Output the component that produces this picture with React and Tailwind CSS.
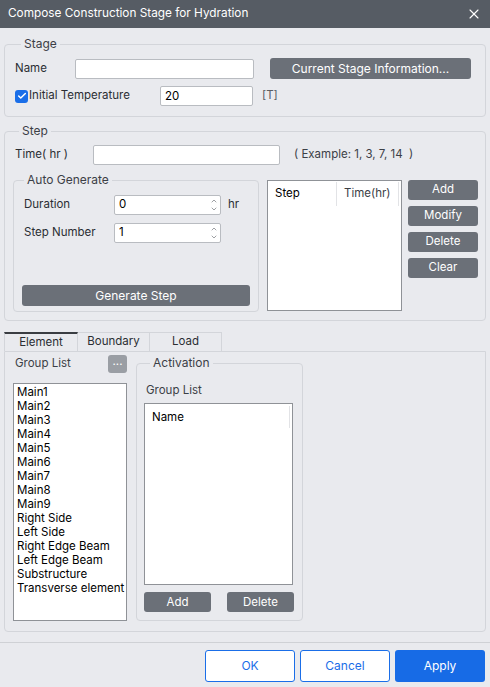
import React from "react";
import { X, Check, ChevronUp, ChevronDown } from "lucide-react";

const groups = [
  "Main1", "Main2", "Main3", "Main4", "Main5", "Main6", "Main7", "Main8", "Main9",
  "Right Side", "Left Side", "Right Edge Beam", "Left Edge Beam", "Substructure", "Transverse element",
];

const GrayButton = ({ children, className = "" }) => (
  <button
    type="button"
    className={`bg-[#6b7078] text-white text-[11.5px] rounded-[3px] flex items-center justify-center ${className}`}
  >
    {children}
  </button>
);

const SpinBox = ({ value }) => (
  <div className="w-[107px] h-[20px] bg-white border border-[#b9bcc1] rounded-[2px] flex items-center pl-[4px]">
    <span className="flex-1 text-[11.5px] text-black">{value}</span>
    <div className="flex flex-col items-center pr-[2px] text-[#8a8d92]">
      <ChevronUp size={8} strokeWidth={2.5} />
      <ChevronDown size={8} strokeWidth={2.5} />
    </div>
  </div>
);

const Legend = ({ children, className = "" }) => (
  <legend className={`px-[3px] text-[12px] leading-[16px] text-[#3c4046] ${className}`}>{children}</legend>
);

export default function App() {
  return (
    <div
      className="w-[490px] h-[687px] bg-[#e9eaee] flex flex-col text-[11.5px] text-[#2b2e33] overflow-hidden"
      style={{ fontFamily: "Inter, 'Noto Sans', sans-serif" }}
    >
      {/* Title */}
      <div className="h-[28px] bg-[#565c64] flex items-center justify-between pl-[8px] pr-[8px] shrink-0">
        <span className="text-white text-[11.8px]">Compose Construction Stage for Hydration</span>
        <X size={16} strokeWidth={1.6} className="text-white" />
      </div>

      <div className="px-[4px] pt-[8px] flex flex-col">
        {/* Stage */}
        <fieldset className="border border-[#d3d5da] rounded-[4px] pl-[10px] pr-[12px] pb-[10px] h-[81px]">
          <Legend className="ml-[6px]">Stage</Legend>
          <div className="flex items-center mt-[6px] h-[21px]">
            <span className="w-[60px]">Name</span>
            <div className="w-[179px] h-[20px] bg-white border border-[#b9bcc1] rounded-[2px]" />
            <GrayButton className="ml-[16px] w-[201px] h-[21px] text-[12px]">Current Stage Information...</GrayButton>
          </div>
          <div className="flex items-center mt-[7px] h-[20px]">
            <div className="w-[13px] h-[13px] rounded-[3px] bg-[#1a6ee8] flex items-center justify-center">
              <Check size={10} strokeWidth={3.5} className="text-white" />
            </div>
            <span className="ml-[1px] w-[131px]">Initial Temperature</span>
            <div className="w-[93px] h-[20px] bg-white border border-[#b9bcc1] rounded-[2px] pl-[4px] text-black leading-[18px]">20</div>
            <span className="ml-[9px] text-[#5a5e64]">[T]</span>
          </div>
        </fieldset>

        {/* Step */}
        <fieldset className="mt-[6px] border border-[#d3d5da] rounded-[4px] pl-[8px] pr-[7px] h-[198px]">
          <Legend className="ml-[6px]">Step</Legend>
          <div className="flex items-center mt-[6px] h-[20px]">
            <span className="ml-[2px] w-[78px]">Time( hr )</span>
            <div className="w-[187px] h-[20px] bg-white border border-[#b9bcc1] rounded-[2px]" />
            <span className="ml-[14px] text-[#3c4046]">( Example: 1, 3, 7, 14&nbsp;&nbsp;)</span>
          </div>
          <div className="flex mt-[7px]">
            <fieldset className="w-[246px] h-[140px] border border-[#d3d5da] rounded-[4px] pl-[10px] pr-[8px]">
              <Legend>Auto Generate</Legend>
              <div className="flex items-center mt-[7px]">
                <span className="w-[90px]">Duration</span>
                <SpinBox value="0" />
                <span className="ml-[7px]">hr</span>
              </div>
              <div className="flex items-center mt-[8px]">
                <span className="w-[90px]">Step Number</span>
                <SpinBox value="1" />
              </div>
              <GrayButton className="mt-[42px] -ml-[2px] w-[228px] h-[21px] text-[12px]">Generate Step</GrayButton>
            </fieldset>
            <div className="ml-[8px] mt-[8px] w-[135px] h-[131px] bg-white border border-[#8f9297] flex flex-col">
              <div className="flex h-[25px] items-center">
                <span className="w-[68px] pl-[7px] text-black">Step</span>
                <div className="w-px h-[24px] bg-[#e2e3e6]" />
                <span className="pl-[7px] text-[#3c4046]">Time(hr)</span>
                <div className="ml-auto mr-[2px] w-px h-[24px] bg-[#e2e3e6]" />
              </div>
            </div>
            <div className="ml-[6px] mt-[8px] flex flex-col gap-[6px]">
              <GrayButton className="w-[70px] h-[20px]">Add</GrayButton>
              <GrayButton className="w-[70px] h-[20px]">Modify</GrayButton>
              <GrayButton className="w-[70px] h-[20px]">Delete</GrayButton>
              <GrayButton className="w-[70px] h-[20px]">Clear</GrayButton>
            </div>
          </div>
        </fieldset>

        {/* Tabs */}
        <div className="mt-[11px] flex h-[19px]">
          <div className="w-[74px] border-t-2 border-t-[#3a3d42] border-x border-x-[#d3d5da] flex items-center justify-center text-[#2b2e33]">Element</div>
          <div className="w-[72px] border-t border-r border-[#d3d5da] flex items-center justify-center">Boundary</div>
          <div className="w-[72px] border-t border-r border-[#d3d5da] flex items-center justify-center">Load</div>
        </div>
        <div className="h-[281px] border border-[#d3d5da] rounded-b-[4px] pl-[8px] flex">
          <div className="w-[114px] flex flex-col">
            <div className="flex items-center justify-between h-[18px] mt-[3px]">
              <span className="ml-[2px] text-[#3c4046]">Group List</span>
              <GrayButton className="w-[19px] h-[18px] bg-[#9a9ea4] text-[10px] leading-none pb-[4px]">...</GrayButton>
            </div>
            <div className="mt-[10px] h-[238px] bg-white border border-[#8f9297] pt-[1px] pl-[3px] flex flex-col text-black leading-[14px] overflow-hidden">
              {groups.map((g) => (
                <span key={g} className="whitespace-nowrap">{g}</span>
              ))}
            </div>
          </div>
          <fieldset className="ml-[9px] mt-[3px] w-[166px] h-[266px] border border-[#d3d5da] rounded-[4px] pl-[7px] pr-[8px]">
            <Legend className="ml-[6px]">Activation</Legend>
            <div className="mt-[11px] ml-[2px] text-[#3c4046]">Group List</div>
            <div className="mt-[4px] w-[149px] h-[182px] bg-white border border-[#8f9297] flex">
              <span className="pl-[7px] pt-[5px] text-black flex-1">Name</span>
              <div className="mr-[2px] mt-[2px] w-px h-[22px] bg-[#e2e3e6]" />
            </div>
            <div className="flex justify-between mt-[7px] w-[150px]">
              <GrayButton className="w-[67px] h-[20px]">Add</GrayButton>
              <GrayButton className="w-[67px] h-[20px]">Delete</GrayButton>
            </div>
          </fieldset>
        </div>
      </div>

      {/* Footer */}
      <div className="mt-[10px] border-t border-[#cfd1d5] flex justify-end pt-[7px] pr-[5px] gap-[5px]">
        <button type="button" className="w-[90px] h-[32px] bg-white border border-[#1a6ee8] rounded-[3px] text-[#1a6ee8] text-[12px]">OK</button>
        <button type="button" className="w-[90px] h-[32px] bg-white border border-[#1a6ee8] rounded-[3px] text-[#1a6ee8] text-[12px]">Cancel</button>
        <button type="button" className="w-[90px] h-[32px] bg-[#176be6] rounded-[3px] text-white text-[12px]">Apply</button>
      </div>
    </div>
  );
}
